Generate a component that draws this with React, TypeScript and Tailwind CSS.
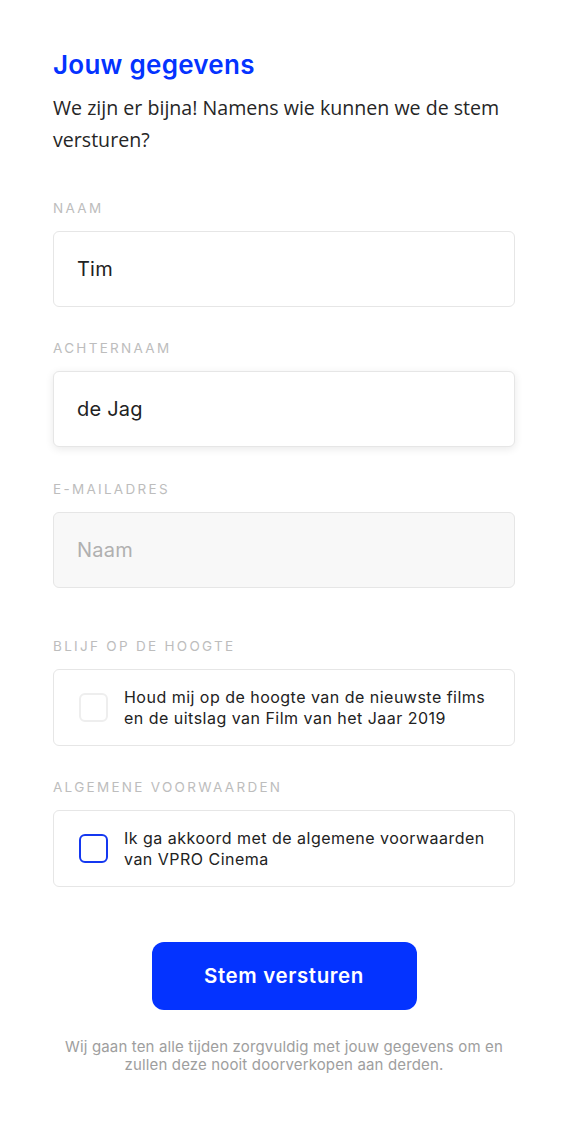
import { useState } from "react";

const labelCls =
  "block text-[13.5px] leading-[16px] tracking-[0.17em] uppercase text-[#bdbdbd] mb-[15px]";
const boxFont = { fontFamily: "Inter, 'Liberation Sans', sans-serif" };

function Field({
  label,
  value,
  placeholder,
  raised,
  muted,
  className,
}: {
  label: string;
  value?: string;
  placeholder?: string;
  raised?: boolean;
  muted?: boolean;
  className?: string;
}) {
  const [val, setVal] = useState(value ?? "");
  return (
    <div className={className}>
      <label className={labelCls}>{label}</label>
      <input
        value={val}
        onChange={(e) => setVal(e.target.value)}
        placeholder={placeholder}
        className={
          "w-full h-[76px] px-[23px] rounded-[6px] border border-[#e6e6e6] outline-none text-[20px] tracking-[0.01em] text-[#222] placeholder:text-[#b0b0b0] " +
          (muted ? "bg-[#f8f8f8] " : "bg-white ") +
          (raised ? "shadow-[0_2px_8px_rgba(0,0,0,0.09)]" : "")
        }
      />
    </div>
  );
}

function CheckRow({
  label,
  text,
  active,
  className,
}: {
  label: string;
  text: string[];
  active?: boolean;
  className?: string;
}) {
  const [checked, setChecked] = useState(false);
  return (
    <div className={className}>
      <label className={labelCls}>{label}</label>
      <button
        type="button"
        onClick={() => setChecked(!checked)}
        className="w-full h-[77px] flex items-center gap-[16px] pl-[25px] pr-[12px] rounded-[6px] border border-[#e6e6e6] bg-white text-left"
      >
        <span
          className={
            "w-[29px] h-[29px] shrink-0 rounded-[6px] border-[2px] flex items-center justify-center " +
            (active ? "border-[#1438f0]" : "border-[#eeeeee]")
          }
        >
          {checked && <span className="w-[13px] h-[13px] rounded-[3px] bg-[#0433ff]" />}
        </span>
        <span className="text-[16px] leading-[21px] tracking-[0.03em] text-[#222]">
          {text.map((t) => (
            <span key={t} className="block whitespace-nowrap">
              {t}
            </span>
          ))}
        </span>
      </button>
    </div>
  );
}

export default function App() {
  return (
    <div className="min-h-[1144px] bg-white px-[53px] pt-[49px] pb-[60px]" style={boxFont}>
      <h1 className="text-[26px] leading-[32px] font-semibold text-[#0433ff] tracking-[0.01em]">
        Jouw gegevens
      </h1>
      <p
        className="mt-[11px] text-[19.6px] leading-[32px] text-[#262626]"
        style={{ fontFamily: "'Open Sans', 'Noto Sans', sans-serif" }}
      >
        We zijn er bijna! Namens wie kunnen we de stem versturen?
      </p>

      <form onSubmit={(e) => e.preventDefault()}>
        <Field className="mt-[44px]" label="Naam" value="Tim" />
        <Field className="mt-[33px]" label="Achternaam" value="de Jag" raised />
        <Field className="mt-[34px]" label="E-mailadres" placeholder="Naam" muted />

        <CheckRow
          className="mt-[50px]"
          label="Blijf op de hoogte"
          text={["Houd mij op de hoogte van de nieuwste films", "en de uitslag van Film van het Jaar 2019"]}
        />
        <CheckRow
          className="mt-[33px]"
          label="Algemene voorwaarden"
          text={["Ik ga akkoord met de algemene voorwaarden", "van VPRO Cinema"]}
          active
        />

        <div className="mt-[55px] flex justify-center">
          <button
            type="submit"
            className="w-[265px] h-[68px] rounded-[12px] bg-[#0433ff] text-white text-[20.5px] font-semibold tracking-[0.03em]"
          >
            Stem versturen
          </button>
        </div>
      </form>

      <p className="mt-[28px] text-center text-[15px] leading-[18px] tracking-[0.01em] text-[#9e9e9e]">
        Wij gaan ten alle tijden zorgvuldig met jouw gegevens om en
        <br />
        zullen deze nooit doorverkopen aan derden.
      </p>
    </div>
  );
}
